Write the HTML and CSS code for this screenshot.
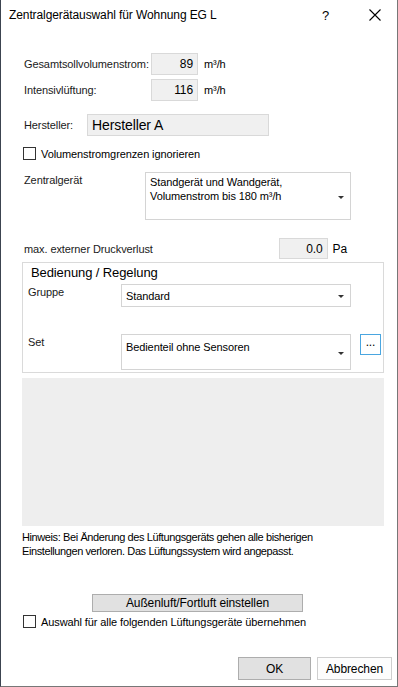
FILE: index.html
```html
<!DOCTYPE html>
<html lang="de">
    <head>
        <meta charset="UTF-8" />
        <meta name="viewport" content="width=device-width, initial-scale=1.0" />
        <title>Zentralgerätauswahl</title>
        <link rel="stylesheet" href="styles.css">
    </head>
    <body>
        <div id="dialog">
            <div class="titlebar">
                <span class="title">Zentralgerätauswahl für Wohnung EG L</span>
                <span class="help">?</span>
                <svg class="close" width="12" height="12" viewBox="0 0 12 12">
                    <path d="M0.5 0.5 L11.5 11.5 M11.5 0.5 L0.5 11.5" stroke="#000" stroke-width="1.1" fill="none" />
                </svg>
            </div>

            <div class="content">
                <div class="row r-vol">
                    <span class="lbl w-vol">Gesamtsollvolumenstrom:</span>
                    <span class="field num w-num">89</span>
                    <span class="unit">m³/h</span>
                </div>
                <div class="row r-int">
                    <span class="lbl w-vol">Intensivlüftung:</span>
                    <span class="field num w-num">116</span>
                    <span class="unit">m³/h</span>
                </div>
                <div class="row r-her">
                    <span class="lbl w-her">Hersteller:</span>
                    <span class="field big w-herbox">Hersteller A</span>
                </div>
                <label class="check r-chk1"><span class="box"></span>Volumenstromgrenzen ignorieren</label>

                <div class="row r-zen">
                    <span class="lbl w-zen top">Zentralgerät</span>
                    <div class="combo w-zenbox">
                        <span>Standgerät und Wandgerät,<br>Volumenstrom bis 180 m³/h</span>
                        <span class="arrow a-zen"></span>
                    </div>
                </div>

                <div class="row r-dru">
                    <span class="lbl grow">max. externer Druckverlust</span>
                    <span class="field num w-dru">0.0</span>
                    <span class="unit u-pa">Pa</span>
                </div>

                <div class="group">
                    <div class="gtitle">Bedienung / Regelung</div>
                    <div class="grow-row g1">
                        <span class="lbl w-g top">Gruppe</span>
                        <div class="combo w-gbox">
                            <span>Standard</span>
                            <span class="arrow a-g"></span>
                        </div>
                    </div>
                    <div class="grow-row g2">
                        <span class="lbl w-g top">Set</span>
                        <div class="combo w-gbox setbox">
                            <span>Bedienteil ohne Sensoren</span>
                            <span class="arrow a-set"></span>
                        </div>
                        <span class="dots">...</span>
                    </div>
                </div>

                <div class="preview"></div>

                <p class="hint">Hinweis: Bei Änderung des Lüftungsgeräts gehen alle bisherigen<br>Einstellungen verloren. Das Lüftungssystem wird angepasst.</p>

                <div class="center">
                    <button class="btn wide">Außenluft/Fortluft einstellen</button>
                </div>
                <label class="check r-chk2"><span class="box"></span>Auswahl für alle folgenden Lüftungsgeräte übernehmen</label>

                <div class="footer">
                    <button class="btn ok">OK</button>
                    <button class="btn cancel">Abbrechen</button>
                </div>
            </div>
        </div>
    </body>
</html>
```
FILE: styles.css
```css
* {
    box-sizing: border-box;
}

body {
    margin: 0;
    background: #fff;
    font-family: "Liberation Sans", Arial, sans-serif;
    font-size: 11px;
    letter-spacing: -0.1px;
    color: #000;
}

#dialog {
    width: 398px;
    height: 687px;
    border-left: 1px solid #3c4450;
    border-right: 1px solid #777;
    border-bottom: 1px solid #777;
    background: #fff;
    overflow: hidden;
}

.titlebar {
    height: 31px;
    display: flex;
    align-items: center;
    padding-left: 8px;
}

.title {
    font-size: 12px;
    flex: 1;
    margin-top: -1px;
}

.help {
    font-size: 13px;
    width: 12px;
    margin-right: 35px;
    margin-top: -1px;
}

.close {
    margin-right: 16px;
    margin-top: -2px;
}

.content {
    padding-left: 21px;
    padding-right: 13px;
}

.row {
    display: flex;
    align-items: center;
    height: 22px;
}

.lbl {
    padding-left: 2px;
    color: #1a1a1a;
}

.lbl.top {
    align-self: flex-start;
    padding-top: 2px;
}

.grow {
    flex: 1;
}

.w-vol { width: 129px; }
.w-her { width: 65px; }
.w-zen { width: 123px; }

.field {
    height: 22px;
    background: #f0f0f0;
    border: 1px solid #d9d9d9;
    display: flex;
    align-items: center;
}

.num {
    justify-content: flex-end;
    padding-right: 4px;
    font-size: 12px;
}

.w-num { width: 47px; }
.w-herbox { width: 182px; }
.w-dru { width: 49px; height: 21px; }

.big {
    font-size: 14px;
    padding-left: 4px;
}

.unit {
    margin-left: 6px;
    font-size: 11px;
}

.u-pa {
    margin-left: 5px;
    font-size: 12px;
    margin-right: 37px;
}

.r-vol { margin-top: 22px; }
.r-int { margin-top: 4px; }
.r-her { margin-top: 13px; }

.check {
    display: flex;
    align-items: center;
    height: 13px;
    padding-left: 1px;
}

.check .box {
    width: 13px;
    height: 13px;
    border: 1px solid #333;
    margin-right: 5px;
    background: #fff;
}

.r-chk1 { margin-top: 11px; }

.r-zen {
    margin-top: 12px;
    height: 48px;
    align-items: flex-start;
}

.combo {
    position: relative;
    background: #fff;
    border: 1px solid #d4d4d4;
    padding: 1px 4px;
    line-height: 14px;
}

.w-zenbox {
    width: 206px;
    height: 48px;
    padding-top: 2px;
}

.arrow {
    position: absolute;
    right: 6px;
    width: 0;
    height: 0;
    border-left: 3px solid transparent;
    border-right: 3px solid transparent;
    border-top: 3px solid #333;
}

.a-zen { top: 23px; }
.a-g { top: 10px; }
.a-set { top: 17px; }

.r-dru {
    margin-top: 18px;
    height: 21px;
}

.group {
    margin-top: 3px;
    height: 111px;
    width: 362px;
    border: 1px solid #dadada;
    padding-left: 4px;
}

.gtitle {
    font-size: 13px;
    padding-left: 4px;
    line-height: 18px;
    margin-top: 1px;
}

.grow-row {
    display: flex;
    align-items: flex-start;
}

.w-g { width: 94px; padding-left: 1px; }

.w-gbox {
    width: 230px;
    height: 23px;
    padding-top: 4px;
}

.g1 { margin-top: 2px; }
.g2 { margin-top: 27px; }

.setbox {
    height: 36px;
    padding-top: 5px;
}

.dots {
    margin-left: 9px;
    width: 21px;
    height: 21px;
    border: 1px solid #4aa6e0;
    text-align: center;
    line-height: 15px;
    font-size: 12px;
}

.preview {
    margin-top: 5px;
    width: 362px;
    height: 148px;
    background: #eeeeee;
}

.hint {
    margin: 4px 0 0;
    height: 28px;
    line-height: 14px;
    letter-spacing: -0.4px;
}

.center {
    margin-top: 36px;
    padding-left: 70px;
}

.btn {
    font-family: inherit;
    font-size: 12px;
    letter-spacing: -0.1px;
    color: #000;
    background: #e1e1e1;
    border: 1px solid #adadad;
    padding: 0;
}

.wide {
    width: 211px;
    height: 18px;
    line-height: 14px;
}

.r-chk2 { margin-top: 3px; }

.footer {
    display: flex;
    justify-content: flex-end;
    gap: 6px;
    margin-top: 29px;
    margin-right: -8px;
}

.ok {
    width: 73px;
    height: 23px;
}

.cancel {
    width: 75px;
    height: 23px;
    background: #fdfdfd;
    border-color: #cfcfcf;
}
```
